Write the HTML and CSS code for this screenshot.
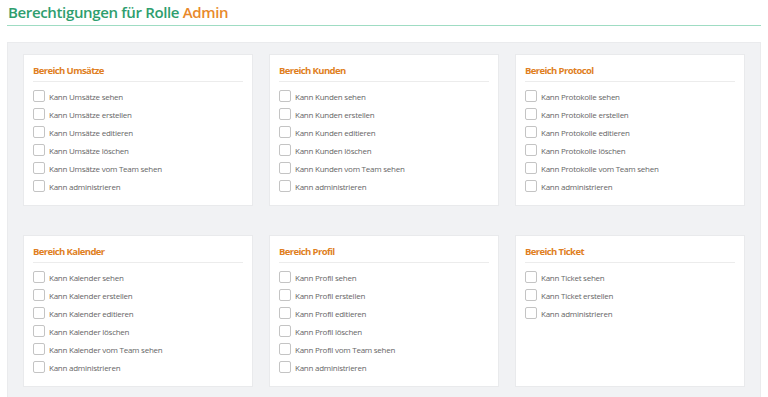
FILE: index.html
```html
<!DOCTYPE html>
<html lang="de">

<head>
    <meta charset="UTF-8">
    <meta name="viewport" content="width=device-width, initial-scale=1.0">
    <title>Berechtigungen</title>
    <link rel="stylesheet" href="styles.css">
</head>

<body>
    <h1 class="page-title">Berechtigungen für Rolle <span class="role">Admin</span></h1>

    <div class="panel">
        <div class="card-grid">
            <section class="card">
                <h2 class="card-title">Bereich Umsätze</h2>
                <label class="perm"><input type="checkbox"> Kann Umsätze sehen</label>
                <label class="perm"><input type="checkbox"> Kann Umsätze erstellen</label>
                <label class="perm"><input type="checkbox"> Kann Umsätze editieren</label>
                <label class="perm"><input type="checkbox"> Kann Umsätze löschen</label>
                <label class="perm"><input type="checkbox"> Kann Umsätze vom Team sehen</label>
                <label class="perm"><input type="checkbox"> Kann administrieren</label>
            </section>
            <section class="card">
                <h2 class="card-title">Bereich Kunden</h2>
                <label class="perm"><input type="checkbox"> Kann Kunden sehen</label>
                <label class="perm"><input type="checkbox"> Kann Kunden erstellen</label>
                <label class="perm"><input type="checkbox"> Kann Kunden editieren</label>
                <label class="perm"><input type="checkbox"> Kann Kunden löschen</label>
                <label class="perm"><input type="checkbox"> Kann Kunden vom Team sehen</label>
                <label class="perm"><input type="checkbox"> Kann administrieren</label>
            </section>
            <section class="card">
                <h2 class="card-title">Bereich Protocol</h2>
                <label class="perm"><input type="checkbox"> Kann Protokolle sehen</label>
                <label class="perm"><input type="checkbox"> Kann Protokolle erstellen</label>
                <label class="perm"><input type="checkbox"> Kann Protokolle editieren</label>
                <label class="perm"><input type="checkbox"> Kann Protokolle löschen</label>
                <label class="perm"><input type="checkbox"> Kann Protokolle vom Team sehen</label>
                <label class="perm"><input type="checkbox"> Kann administrieren</label>
            </section>
            <section class="card">
                <h2 class="card-title">Bereich Kalender</h2>
                <label class="perm"><input type="checkbox"> Kann Kalender sehen</label>
                <label class="perm"><input type="checkbox"> Kann Kalender erstellen</label>
                <label class="perm"><input type="checkbox"> Kann Kalender editieren</label>
                <label class="perm"><input type="checkbox"> Kann Kalender löschen</label>
                <label class="perm"><input type="checkbox"> Kann Kalender vom Team sehen</label>
                <label class="perm"><input type="checkbox"> Kann administrieren</label>
            </section>
            <section class="card">
                <h2 class="card-title">Bereich Profil</h2>
                <label class="perm"><input type="checkbox"> Kann Profil sehen</label>
                <label class="perm"><input type="checkbox"> Kann Profil erstellen</label>
                <label class="perm"><input type="checkbox"> Kann Profil editieren</label>
                <label class="perm"><input type="checkbox"> Kann Profil löschen</label>
                <label class="perm"><input type="checkbox"> Kann Profil vom Team sehen</label>
                <label class="perm"><input type="checkbox"> Kann administrieren</label>
            </section>
            <section class="card">
                <h2 class="card-title">Bereich Ticket</h2>
                <label class="perm"><input type="checkbox"> Kann Ticket sehen</label>
                <label class="perm"><input type="checkbox"> Kann Ticket erstellen</label>
                <label class="perm"><input type="checkbox"> Kann administrieren</label>
            </section>
        </div>
    </div>
</body>

</html>
```

FILE: styles.css
```css
body {
    font-family: "Open Sans", "Noto Sans", sans-serif;
    margin: 0;
    padding: 0 7px;
    background: #fff;
}

.page-title {
    margin: 0;
    padding: 1px 0 2px 1px;
    font-size: 15px;
    font-weight: 600;
    line-height: 22px;
    letter-spacing: -0.35px;
    color: #2e9e6e;
    border-bottom: 1px solid #9fdcc3;
}

.role {
    color: #e8892b;
}

.panel {
    margin-top: 16px;
    background: #f1f2f4;
    border: 1px solid #eaebed;
    padding: 11px 15px 10px;
}

.card-grid {
    display: grid;
    grid-template-columns: repeat(3, 230px);
    column-gap: 16px;
    row-gap: 29px;
}

.card {
    background: #fff;
    border: 1px solid #e9eaec;
    padding: 9px 9px 10px;
    display: flex;
    flex-direction: column;
}

.card-title {
    margin: 0 0 5px;
    padding-bottom: 3px;
    font-size: 9.5px;
    font-weight: 700;
    line-height: 14px;
    letter-spacing: -0.6px;
    color: #e07f1f;
    border-bottom: 1px solid #ececec;
}

.perm {
    display: flex;
    align-items: center;
    gap: 4px;
    height: 18px;
    font-size: 8px;
    letter-spacing: -0.25px;
    color: #666;
}

.perm input {
    appearance: none;
    margin: 0;
    width: 12px;
    height: 12px;
    border: 1px solid #c4c4c4;
    border-radius: 2px;
    background: #fff;
}
```
